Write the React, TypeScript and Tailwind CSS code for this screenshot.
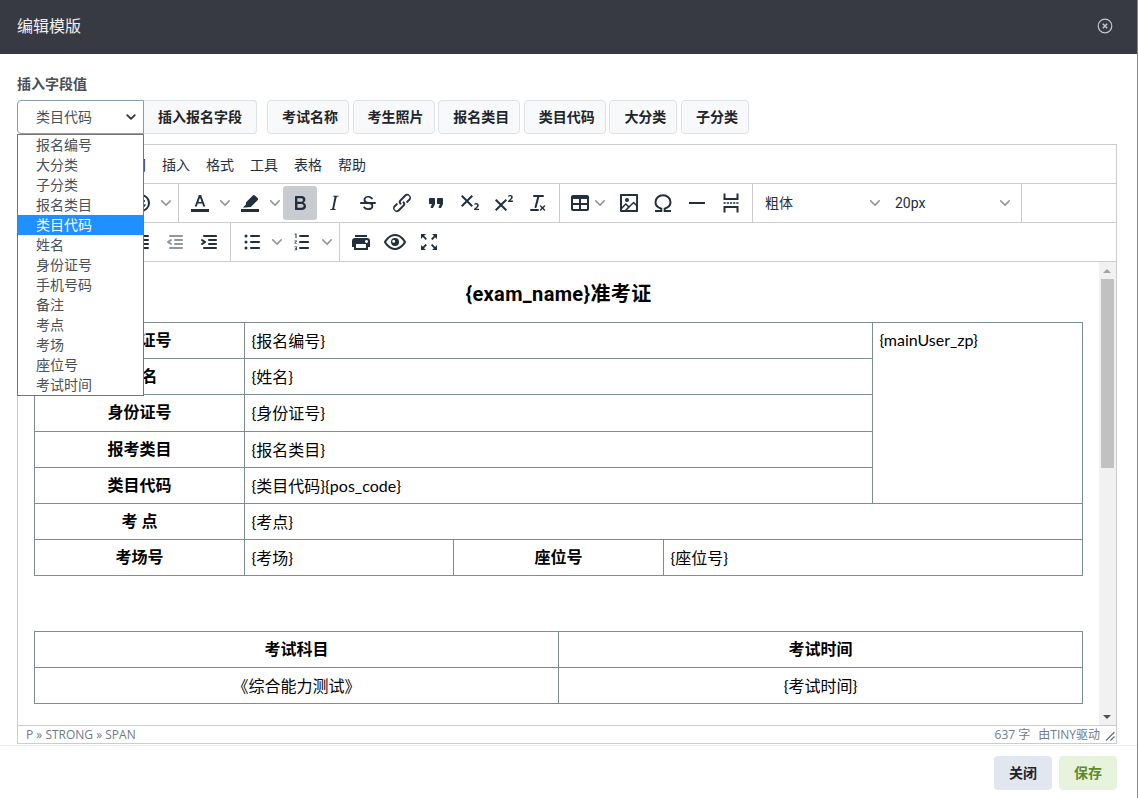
const FONT = "font-['Roboto','Noto_Sans_CJK_SC',sans-serif]";

const paths: Record<string, string> = {
    undo: 'M6.4 8H12c3.7 0 6.2 2 6.8 5.1.6 2.7-.4 5.6-2.3 6.8a1 1 0 0 1-1-1.8c1.1-.6 1.8-2.7 1.4-4.6-.5-2.1-2.1-3.5-4.9-3.5H6.4l3.3 3.3a1 1 0 1 1-1.4 1.4l-5-5a1 1 0 0 1 0-1.4l5-5a1 1 0 0 1 1.4 1.4L6.4 8z',
    redo: 'M17.6 10H12c-2.8 0-4.4 1.4-4.9 3.5-.4 2 .3 4 1.4 4.6a1 1 0 1 1-1 1.8c-2-1.2-2.9-4.1-2.3-6.8.6-3 3-5.1 6.8-5.1h5.6l-3.3-3.3a1 1 0 1 1 1.4-1.4l5 5a1 1 0 0 1 0 1.4l-5 5a1 1 0 0 1-1.4-1.4l3.3-3.3z',
    removeLine: 'M5 11h14a1 1 0 0 1 0 2H5a1 1 0 0 1 0-2z',
    emoji: 'M9 11c.6 0 1-.4 1-1s-.4-1-1-1-1 .4-1 1 .4 1 1 1zm6 0c.6 0 1-.4 1-1s-.4-1-1-1-1 .4-1 1 .4 1 1 1zm-3 6c2.3 0 4.3-1.5 5-3.5H7c.7 2 2.7 3.5 5 3.5zM12 3a9 9 0 1 0 0 18 9 9 0 0 0 0-18zm0 16a7 7 0 1 1 0-14 7 7 0 0 1 0 14z',
    textColor: 'M3 18h18v3H3v-3zM10.9 4h2.2l4.2 11.5h-2.1l-1-2.9H9.8l-1 2.9H6.7L10.9 4zm-.5 6.9h3.2L12 6.4l-1.6 4.5z',
    highlight: 'M3 18h18v3H3v-3zM14.8 4.4a1.5 1.5 0 0 1 2.1 0l2.7 2.7a1.5 1.5 0 0 1 0 2.1l-6.8 6.9-5.1.4-2.7-.1 2.9-2.9.2-2.3 6.7-6.8z',
    bold: 'M7.8 19c-.3 0-.5 0-.6-.2l-.2-.5V5.7c0-.2 0-.4.2-.5l.6-.2h5c1.5 0 2.7.3 3.5 1 .7.6 1.1 1.4 1.1 2.5a3 3 0 0 1-.6 1.9c-.4.6-1 1-1.6 1.2.4.1.9.3 1.3.6s.8.7 1 1.2c.4.4.5 1 .5 1.6 0 1.3-.4 2.3-1.3 3-.8.7-2.1 1-3.8 1H7.8zm5-8.3c.6 0 1.2-.1 1.6-.5.4-.3.6-.7.6-1.3 0-1.1-.8-1.7-2.3-1.7H9.3v3.5h3.4zm.5 6c.7 0 1.3-.1 1.7-.4.4-.4.6-.9.6-1.5s-.2-1-.7-1.4c-.4-.3-1-.4-2-.4H9.4v3.8h4z',
    italic: 'M16.7 4.7l-.1.9h-.3c-.6 0-1 0-1.4.3-.3.3-.4.6-.5 1.1l-2.1 9.8v.6c0 .5.4.8 1.4.8h.2l-.2.8H8l.2-.8h.2c1.1 0 1.8-.5 2-1.5l2-9.8.1-.5c0-.6-.4-.8-1.4-.8h-.3l.2-.9h5.8z',
    strike: 'M15.6 8.5c-.5-.7-1-1.1-1.3-1.3-.6-.4-1.3-.6-2-.6-2.7 0-2.8 1.7-2.8 2.1 0 1.6 1.8 2 3.2 2.3 4.4.9 4.6 2.8 4.6 3.9 0 1.4-.7 4.1-5 4.1A6.2 6.2 0 0 1 7 16.4l1.5-1.1c.4.6 1.6 2 3.7 2 1.6 0 2.5-.4 3-1.2.4-.8.3-2-.8-2.6-.7-.4-1.6-.7-2.9-1-1-.2-3.9-.8-3.9-3.6C7.6 6 10.3 5 12.4 5c2.9 0 4.2 1.6 4.7 2.4l-1.5 1.1zM5 11h14a1 1 0 0 1 0 2H5a1 1 0 0 1 0-2z',
    link: 'M6.2 12.3a1 1 0 0 1 1.4 1.4l-2 2a2 2 0 1 0 2.6 2.8l4.8-4.8a1 1 0 0 0 0-1.4 1 1 0 1 1 1.4-1.3 2.9 2.9 0 0 1 0 4L9.6 20a3.9 3.9 0 0 1-5.5-5.5l2-2zm11.6-.6a1 1 0 0 1-1.4-1.4l2-2a2 2 0 1 0-2.6-2.8L11 10.3a1 1 0 0 0 0 1.4A1 1 0 1 1 9.6 13a2.9 2.9 0 0 1 0-4L14.4 4a3.9 3.9 0 0 1 5.5 5.5l-2 2z',
    quote: 'M7.5 17h.9c.4 0 .7-.2.9-.6L11 13V8c0-.6-.4-1-1-1H6a1 1 0 0 0-1 1v4c0 .6.4 1 1 1h2l-1.3 2.7a1 1 0 0 0 .8 1.3zm8 0h.9c.4 0 .7-.2.9-.6L19 13V8c0-.6-.4-1-1-1h-4a1 1 0 0 0-1 1v4c0 .6.4 1 1 1h2l-1.3 2.7a1 1 0 0 0 .8 1.3z',
    sub: 'M10.4 10l4.6 4.6-1.4 1.4L9 11.4 4.4 16 3 14.6 7.6 10 3 5.4 4.4 4 9 8.6 13.6 4 15 5.4 10.4 10zM21 19h-5v-1l1-.8 1.7-1.6c.3-.4.5-.8.5-1.2 0-.3 0-.6-.2-.7-.2-.2-.5-.3-.9-.3a2 2 0 0 0-.8.2l-.7.3-.4-1.1 1-.6 1.2-.2c.8 0 1.4.3 1.8.7.4.4.6.9.6 1.5s-.2 1.1-.5 1.6a8 8 0 0 1-1.3 1.3l-.6.6h2.6V19z',
    sup: 'M15 9.4L10.4 14l4.6 4.6-1.4 1.4L9 15.4 4.4 20 3 18.6 7.6 14 3 9.4 4.4 8 9 12.6 13.6 8 15 9.4zm5.9 1.6h-5v-1l1-.8 1.7-1.6c.3-.5.5-.9.5-1.3 0-.3 0-.5-.2-.7-.2-.2-.5-.3-.9-.3l-.8.2-.7.4-.4-1.2c.2-.2.5-.4 1-.5.3-.2.8-.2 1.2-.2.8 0 1.4.2 1.8.6.4.4.6 1 .6 1.6 0 .5-.2 1-.5 1.5l-1.3 1.4-.6.5h2.6V11z',
    clear: 'M13.2 6a1 1 0 0 1 0 .2l-2.6 10a1 1 0 0 1-1 .8h-.2a.8.8 0 0 1-.8-1l2.6-10H8a1 1 0 1 1 0-2h9a1 1 0 0 1 0 2h-3.8zM5 18h7a1 1 0 0 1 0 2H5a1 1 0 0 1 0-2zm13 1.5L16.5 18 15 19.5a.7.7 0 0 1-1-1l1.5-1.5-1.5-1.5a.7.7 0 0 1 1-1l1.5 1.5 1.5-1.5a.7.7 0 0 1 1 1L17.5 17l1.5 1.5a.7.7 0 0 1-1 1z',
    table: 'M19 4a2 2 0 0 1 2 2v12a2 2 0 0 1-2 2H5a2 2 0 0 1-2-2V6c0-1.1.9-2 2-2h14zM5 14v4h6v-4H5zm14 0h-6v4h6v-4zm0-6h-6v4h6V8zM5 12h6V8H5v4z',
    image: 'M5 15.7l3.3-3.2c.3-.3.7-.3 1 0L12 15l4.1-4c.3-.4.8-.4 1 0l2 1.9V5H5v10.7zM5 18V19h3l2.8-2.9-2-2L5 17.9zm14-3l-2.5-2.4-6.4 6.5H19v-4zM4 3h16c.6 0 1 .4 1 1v16c0 .6-.4 1-1 1H4a1 1 0 0 1-1-1V4c0-.6.4-1 1-1zm6 8a2 2 0 1 0 0-4 2 2 0 0 0 0 4z',
    hr: 'M4 11h16v2H4z',
    pagebreak: 'M19.5 2.500V9h-15V2.500h2V7h11V2.500h2zm0 19V15h-15v6.500h2V17h11v4.500h2zM4.500 11.200h2.200v1.600H4.500v-1.600zm3.300 0H10v1.600H7.800v-1.600zm3.100 0h2.200v1.600h-2.200v-1.600zm3.200 0h2.200v1.600h-2.200v-1.600zm3.200 0h2.200v1.600h-2.200v-1.600z',
    alignLeft: 'M5 5h14a1 1 0 0 1 0 2H5a1 1 0 1 1 0-2zm0 4h8a1 1 0 0 1 0 2H5a1 1 0 0 1 0-2zm0 4h14a1 1 0 0 1 0 2H5a1 1 0 0 1 0-2zm0 4h8a1 1 0 0 1 0 2H5a1 1 0 0 1 0-2z',
    alignCenter: 'M5 5h14a1 1 0 0 1 0 2H5a1 1 0 1 1 0-2zm3 4h8a1 1 0 0 1 0 2H8a1 1 0 1 1 0-2zm0 8h8a1 1 0 0 1 0 2H8a1 1 0 0 1 0-2zm-3-4h14a1 1 0 0 1 0 2H5a1 1 0 0 1 0-2z',
    alignRight: 'M5 5h14a1 1 0 0 1 0 2H5a1 1 0 1 1 0-2zm6 4h8a1 1 0 0 1 0 2h-8a1 1 0 0 1 0-2zm0 8h8a1 1 0 0 1 0 2h-8a1 1 0 0 1 0-2zm-6-4h14a1 1 0 0 1 0 2H5a1 1 0 0 1 0-2z',
    justify: 'M5 5h14a1 1 0 0 1 0 2H5a1 1 0 1 1 0-2zm0 4h14a1 1 0 0 1 0 2H5a1 1 0 1 1 0-2zm0 4h14a1 1 0 0 1 0 2H5a1 1 0 0 1 0-2zm0 4h14a1 1 0 0 1 0 2H5a1 1 0 0 1 0-2z',
    outdent: 'M7 5h12c.6 0 1 .4 1 1s-.4 1-1 1H7a1 1 0 1 1 0-2zm5 4h7c.6 0 1 .4 1 1s-.4 1-1 1h-7a1 1 0 0 1 0-2zm0 4h7c.6 0 1 .4 1 1s-.4 1-1 1h-7a1 1 0 0 1 0-2zm-5 4h12a1 1 0 0 1 0 2H7a1 1 0 0 1 0-2zm1.600-3.800a1 1 0 0 1-1.200 1.600l-3-2a1 1 0 0 1 0-1.600l3-2a1 1 0 0 1 1.200 1.600L6.800 12l1.800 1.200z',
    indent: 'M7 5h12c.6 0 1 .4 1 1s-.4 1-1 1H7a1 1 0 1 1 0-2zm5 4h7c.6 0 1 .4 1 1s-.4 1-1 1h-7a1 1 0 0 1 0-2zm0 4h7c.6 0 1 .4 1 1s-.4 1-1 1h-7a1 1 0 0 1 0-2zm-5 4h12a1 1 0 0 1 0 2H7a1 1 0 0 1 0-2zm-2.600-3.800L6.200 12l-1.800-1.200a1 1 0 0 1 1.200-1.600l3 2a1 1 0 0 1 0 1.600l-3 2a1 1 0 1 1-1.200-1.600z',
    bullist: 'M11 5h8c.6 0 1 .4 1 1s-.4 1-1 1h-8a1 1 0 0 1 0-2zm0 6h8c.6 0 1 .4 1 1s-.4 1-1 1h-8a1 1 0 0 1 0-2zm0 6h8c.6 0 1 .4 1 1s-.4 1-1 1h-8a1 1 0 0 1 0-2zM6 4.500a1.500 1.500 0 1 1 0 3 1.500 1.500 0 0 1 0-3zm0 6a1.500 1.500 0 1 1 0 3 1.500 1.500 0 0 1 0-3zm0 6a1.500 1.500 0 1 1 0 3 1.500 1.500 0 0 1 0-3z',
    numlist: 'M10 17h8c.6 0 1 .4 1 1s-.4 1-1 1h-8a1 1 0 0 1 0-2zm0-6h8c.6 0 1 .4 1 1s-.4 1-1 1h-8a1 1 0 0 1 0-2zm0-6h8c.6 0 1 .4 1 1s-.4 1-1 1h-8a1 1 0 1 1 0-2zM5.500 3.500h1V8h-1V4.500h-.8v-.6l.8-.4zM4.500 10.500h2.400v.7l-1.500 1.700h1.600v.7H4.500v-.7l1.500-1.700H4.500v-.7zm0 6h2.400v3.700H4.500v-.7h1.600v-.8H5v-.6h1.100v-.8H4.500v-.8z',
    print: 'M18 8H6a3 3 0 0 0-3 3v6h2v3h14v-3h2v-6a3 3 0 0 0-3-3zm-1 10H7v-4h10v4zm.5-5c-.8 0-1.500-.7-1.500-1.500s.7-1.500 1.500-1.500 1.500.7 1.500 1.500-.7 1.500-1.500 1.500zm.5-8H6v2h12V5z',
    preview: 'M12 4c3 0 5.800 1.400 8.100 3.800a18.200 18.200 0 0 1 2.800 3.700v1l-.7 1.200-2.100 2.500c-2.300 2.400-5 3.800-8.100 3.800s-5.800-1.400-8.100-3.800a18.200 18.200 0 0 1-2.800-3.700 1 1 0 0 1 0-1l.7-1.200L4 7.800C6.200 5.400 8.900 4 12 4zm0 2c-2.500 0-4.700 1.200-6.700 3.200A16.200 16.200 0 0 0 3.200 12c.6.900 1.300 1.900 2.100 2.800 2 2 4.200 3.200 6.700 3.200s4.700-1.200 6.700-3.200a16.200 16.200 0 0 0 2.100-2.800 15.700 15.700 0 0 0-2.100-2.800C16.700 7.200 14.500 6 12 6zm0 2a4 4 0 1 1 0 8 4 4 0 0 1 0-8zm-1.300 1.700a1.500 1.500 0 1 0 0 3 1.500 1.500 0 0 0 0-3z',
    fullscreen: 'M15.300 10l-1.200-1.300 2.900-3L15 4h5v5l-1.800-1.800-2.900 3zM8.700 10L5.800 7l-1.800 2V4h5L7.100 5.800l2.800 2.900L8.700 10zm6.600 4l2.900 3 1.800-2v5h-5l1.900-1.800-3-2.900 1.400-1.200zm-6.600 0l1.200 1.300-2.900 3L9 20H4v-5l1.800 1.800 2.900-3z',
};

function Icon({ name, className = 'text-[#222f3e]' }: { name: string; className?: string }) {
    return (
        <svg width="24" height="24" viewBox="0 0 24 24" className={className} fill="currentColor">
            {name === 'charmap' ? (
                <path
                    d="M4 20H10.300V17.800C7 16.600 4.500 14.500 4.500 11.300 4.500 7.300 7.800 4.300 12 4.300s7.500 3 7.500 7c0 3.200-2.500 5.300-5.800 6.500V20H20"
                    fill="none"
                    stroke="currentColor"
                    strokeWidth="2"
                />
            ) : (
                <path d={paths[name]} />
            )}
        </svg>
    );
}

function Chevron({ className = 'text-[#222f3e]/50' }: { className?: string }) {
    return (
        <svg width="10" height="10" viewBox="0 0 10 10" className={className} fill="currentColor">
            <path d="M8.700 2.200c.3-.3.800-.3 1 0 .4.400.4.900 0 1.200L5.700 7.800c-.3.300-.900.300-1.200 0L.2 3.400a.8.800 0 0 1 0-1.200c.3-.3.800-.3 1.100 0L5 6l3.700-3.800z" />
        </svg>
    );
}

function Btn({ name, active, dim }: { name: string; active?: boolean; dim?: boolean }) {
    return (
        <span className={`flex h-[34px] w-[34px] items-center justify-center rounded-[3px] ${active ? 'bg-[#c8cbcf]' : ''}`}>
            <Icon name={name} className={dim ? 'text-[#222f3e]/50' : undefined} />
        </span>
    );
}

function SplitBtn({ name }: { name: string }) {
    return (
        <span className="flex items-center">
            <Btn name={name} />
            <span className="flex h-[34px] w-4 items-center justify-center">
                <Chevron />
            </span>
        </span>
    );
}

function Group({ children, noBorder }: { children: React.ReactNode; noBorder?: boolean }) {
    return (
        <div className={`flex items-center px-1 py-[2px] ${noBorder ? '' : 'border-r border-[#cccccc]'}`}>{children}</div>
    );
}

function FontSelect({ label }: { label: string }) {
    return (
        <span className="flex h-[34px] w-[130px] items-center justify-between pl-2 pr-[7px] text-[14px] text-[#222f3e]">
            <span>{label}</span>
            <Chevron />
        </span>
    );
}

const cellBorder = 'border border-[#7e8c8d]';

function Label({ children, colSpan }: { children: React.ReactNode; colSpan?: number }) {
    return (
        <td colSpan={colSpan} className={`${cellBorder} px-[6.400px] pt-px text-center font-bold`}>
            {children}
        </td>
    );
}

function Value({ children, colSpan, center }: { children: React.ReactNode; colSpan?: number; center?: boolean }) {
    return (
        <td colSpan={colSpan} className={`${cellBorder} px-[6.400px] pt-px font-['Lato','Noto_Sans_CJK_SC',sans-serif] ${center ? 'text-center' : ''}`}>
            {children}
        </td>
    );
}

const quickFields = [
    { label: '考试名称', w: 'w-[82px]' },
    { label: '考生照片', w: 'w-[82px]' },
    { label: '报名类目', w: 'w-[82px]' },
    { label: '类目代码', w: 'w-[82px]' },
    { label: '大分类', w: 'w-[68px]' },
    { label: '子分类', w: 'w-[68px]' },
];

const options = ['报名编号', '大分类', '子分类', '报名类目', '类目代码', '姓名', '身份证号', '手机号码', '备注', '考点', '考场', '座位号', '考试时间'];
const menus = ['文件', '编辑', '视图', '插入', '格式', '工具', '表格', '帮助'];

export default function App() {
    return (
        <div className={`${FONT} relative flex h-screen w-full flex-col overflow-hidden bg-[#84878b] pr-px text-[14px]`}>
            {/* Header */}
            <div className="flex h-[54px] shrink-0 items-center justify-between bg-[#373a43] pl-[17px] pr-[24px] text-[16px] text-[#f1f1f1]">
                <span>编辑模版</span>
                <svg width="16" height="16" viewBox="0 0 16 16" fill="none" stroke="#c5c8cc" className="-mt-0.5">
                    <circle cx="8" cy="8" r="6.800" strokeWidth="1.200" />
                    <path d="M5.800 5.800l4.400 4.400M10.200 5.800l-4.400 4.400" strokeWidth="1.500" />
                </svg>
            </div>

            {/* Body */}
            <div className="flex min-h-0 flex-1 flex-col bg-white pl-[17px] pr-[20px]">
                <div className="mt-5 h-5 text-[14px] font-semibold leading-5 text-[#495057]">插入字段值</div>

                <div className="mt-[6px] flex h-[34px] items-stretch">
                    <div className="flex w-[127px] items-center justify-between rounded-l-[4px] border border-[#8d9bae] pl-[18px] pr-[5px] text-[#495057]">
                        <span>类目代码</span>
                        <svg width="10" height="10" viewBox="0 0 16 16" fill="none" stroke="#343a40" strokeWidth="3" strokeLinecap="round" strokeLinejoin="round" className="mr-[2px]">
                            <path d="M2 5l6 6 6-6" />
                        </svg>
                    </div>
                    <button className="w-[113px] rounded-r-[4px] border border-l-0 border-[#dee2e6] bg-[#f8f9fa] font-semibold text-[#212529]">
                        插入报名字段
                    </button>
                    <div className="ml-[10px] flex gap-[3.600px]">
                        {quickFields.map((f) => (
                            <button key={f.label} className={`${f.w} rounded-[4px] border border-[#dee2e6] bg-[#f8f9fa] pl-[14px] text-left font-semibold text-[#212529]`}>
                                {f.label}
                            </button>
                        ))}
                    </div>
                </div>

                {/* Editor */}
                <div className="mt-[10px] flex h-[600px] flex-col border border-[#cccccc]">
                    <div className="flex h-[39px] shrink-0 items-center border-b border-[#cccccc] pl-1 pt-[2px]">
                        {menus.map((m) => (
                            <span key={m} className="px-2 text-[14px] text-[#222f3e]">
                                {m}
                            </span>
                        ))}
                    </div>

                    <div className="flex h-[39px] shrink-0 border-b border-[#cccccc]">
                        <Group>
                            <Btn name="undo" />
                            <Btn name="redo" />
                            <Btn name="removeLine" />
                            <SplitBtn name="emoji" />
                        </Group>
                        <Group>
                            <SplitBtn name="textColor" />
                            <SplitBtn name="highlight" />
                            <Btn name="bold" active />
                            <Btn name="italic" />
                            <Btn name="strike" />
                            <Btn name="link" />
                            <Btn name="quote" />
                            <Btn name="sub" />
                            <Btn name="sup" />
                            <Btn name="clear" />
                        </Group>
                        <Group>
                            <span className="flex w-12 items-center pl-1">
                                <Icon name="table" />
                                <span className="ml-[3px]">
                                    <Chevron />
                                </span>
                            </span>
                            <Btn name="image" />
                            <Btn name="charmap" />
                            <Btn name="hr" />
                            <Btn name="pagebreak" />
                        </Group>
                        <Group>
                            <FontSelect label="粗体" />
                            <FontSelect label="20px" />
                        </Group>
                    </div>

                    <div className="flex h-[39px] shrink-0 border-b border-[#cccccc]">
                        <Group>
                            <Btn name="alignLeft" />
                            <Btn name="alignCenter" />
                            <Btn name="alignRight" />
                            <Btn name="justify" />
                            <Btn name="outdent" dim />
                            <Btn name="indent" />
                        </Group>
                        <Group>
                            <SplitBtn name="bullist" />
                            <SplitBtn name="numlist" />
                        </Group>
                        <Group noBorder>
                            <Btn name="print" />
                            <Btn name="preview" />
                            <Btn name="fullscreen" />
                        </Group>
                    </div>

                    {/* Content */}
                    <div className="flex min-h-0 flex-1">
                        <div className="min-w-0 flex-1 overflow-hidden pl-4 text-[16px] leading-[24px] text-black">
                            <div className="mb-[13px] mt-[17px] h-[30px] w-[1049px] text-center text-[20px] font-bold leading-[30px] tracking-[0.35px]">{'{exam_name}准考证'}</div>
                            <table className="w-[1049px] table-fixed border-collapse">
                                <colgroup>
                                    <col className="w-[210px]" />
                                    <col className="w-[209px]" />
                                    <col className="w-[210px]" />
                                    <col className="w-[209px]" />
                                    <col className="w-[210px]" />
                                </colgroup>
                                <tbody>
                                    <tr className="h-[36.200px]">
                                        <Label>准考证号</Label>
                                        <Value colSpan={3}>{'{报名编号}'}</Value>
                                        <td rowSpan={5} className={`${cellBorder} px-[6.400px] pt-[5px] align-top font-['Lato','Noto_Sans_CJK_SC',sans-serif]`}>{'{mainUser_zp}'}</td>
                                    </tr>
                                    <tr className="h-[36.200px]">
                                        <Label>姓 名</Label>
                                        <Value colSpan={3}>{'{姓名}'}</Value>
                                    </tr>
                                    <tr className="h-[36.200px]">
                                        <Label>身份证号</Label>
                                        <Value colSpan={3}>{'{身份证号}'}</Value>
                                    </tr>
                                    <tr className="h-[36.200px]">
                                        <Label>报考类目</Label>
                                        <Value colSpan={3}>{'{报名类目}'}</Value>
                                    </tr>
                                    <tr className="h-[36.200px]">
                                        <Label>类目代码</Label>
                                        <Value colSpan={3}>{'{类目代码}{pos_code}'}</Value>
                                    </tr>
                                    <tr className="h-[36.200px]">
                                        <Label>考 点</Label>
                                        <Value colSpan={4}>{'{考点}'}</Value>
                                    </tr>
                                    <tr className="h-[36.200px]">
                                        <Label>考场号</Label>
                                        <Value>{'{考场}'}</Value>
                                        <Label>座位号</Label>
                                        <Value colSpan={2}>{'{座位号}'}</Value>
                                    </tr>
                                </tbody>
                            </table>
                            <table className="mt-[55px] w-[1049px] table-fixed border-collapse">
                                <tbody>
                                    <tr className="h-[36px]">
                                        <Label>考试科目</Label>
                                        <Label>考试时间</Label>
                                    </tr>
                                    <tr className="h-[36px]">
                                        <Value center>《综合能力测试》</Value>
                                        <Value center>{'{考试时间}'}</Value>
                                    </tr>
                                </tbody>
                            </table>
                        </div>

                        {/* Scrollbar */}
                        <div className="flex w-[17px] shrink-0 flex-col items-center bg-[#f1f1f1] pr-px">
                            <div className="flex h-[17px] items-center justify-center">
                                <div className="h-0 w-0 border-x-[4px] border-b-[4px] border-x-transparent border-b-[#a3a3a3]" />
                            </div>
                            <div className="h-[189px] w-[13px] bg-[#c1c1c1]" />
                            <div className="flex-1" />
                            <div className="flex h-[17px] items-center justify-center">
                                <div className="h-0 w-0 border-x-[4px] border-t-[4px] border-x-transparent border-t-[#505050]" />
                            </div>
                        </div>
                    </div>

                    {/* Status bar */}
                    <div className="flex h-[18px] shrink-0 items-center justify-between border-t border-[#cccccc] pl-2 font-['Open_Sans','Noto_Sans_CJK_SC',sans-serif] text-[12px] text-[#6f7c8a]">
                        <span>P » STRONG » SPAN</span>
                        <div className="flex items-center">
                            <span>637 字</span>
                            <span className="ml-2">由TINY驱动</span>
                            <svg width="10" height="10" viewBox="0 0 10 10" className="ml-[5px] mr-[1px] mt-[3px]" stroke="#5f6b77" strokeWidth="1.100">
                                <path d="M1 9.500L9.500 1M5.500 9.500L9.500 5.500" />
                            </svg>
                        </div>
                    </div>
                </div>
            </div>

            {/* Footer */}
            <div className="flex h-[53px] shrink-0 items-start justify-end gap-[7px] border-t border-[#e9ecef] bg-white pr-[20px] pt-[10px]">
                <button className="h-[34px] w-[58px] rounded-[4px] bg-[#e2e6ee] font-semibold text-[#212529]">关闭</button>
                <button className="h-[34px] w-[58px] rounded-[4px] bg-[#e8f3de] font-semibold text-[#5f8a2a]">保存</button>
            </div>

            {/* Open select list */}
            <div className="absolute left-[17px] top-[134px] w-[127px] border border-[#767676] bg-white text-[#495057]">
                {options.map((o) => (
                    <div key={o} className={`h-5 pl-[18px] leading-5 ${o === '类目代码' ? 'bg-[#1e90ff] text-white' : ''}`}>
                        {o}
                    </div>
                ))}
            </div>
        </div>
    );
}
